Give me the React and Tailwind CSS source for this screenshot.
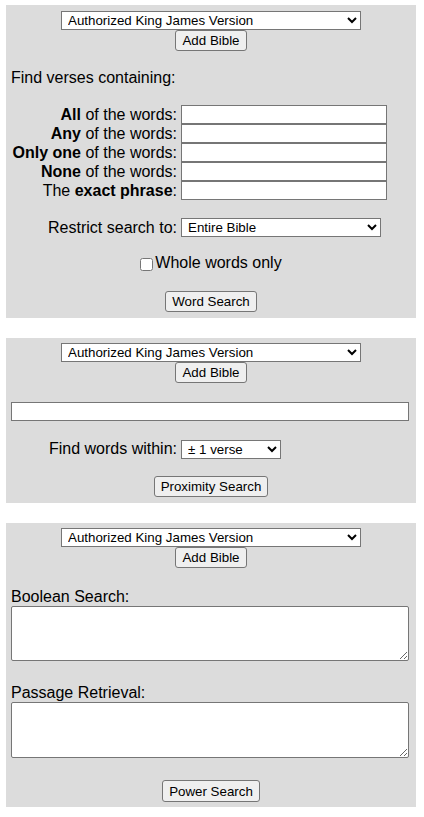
import { useState } from 'react'

const ctrl = "font-['Liberation_Sans',Arial,sans-serif] text-[13.33px] text-black"
const btn = `${ctrl} block mx-auto h-[21px] px-[6px] leading-[19px] bg-[#efefef] border border-[#767676] rounded-[3px]`
const field = 'border border-[#767676] bg-white rounded-[2px]'

function BibleSelect() {
  return (
    <>
      <select
        defaultValue="kjv"
        className={`${ctrl} ${field} block mx-auto w-[300px] h-[19px] pl-[2px] rounded-none`}
      >
        <option value="kjv">Authorized King James Version</option>
        <option value="nkjv">New King James Version</option>
        <option value="asv">American Standard Version</option>
      </select>
      <button type="button" className={btn}>
        Add Bible
      </button>
    </>
  )
}

function WordRow({ label }) {
  return (
    <div className="flex h-[19px] items-center">
      <span className="w-[166px] text-right whitespace-nowrap">{label}</span>
      <input type="text" className={`${ctrl} ${field} ml-[4px] w-[206px] h-[19px] rounded-none`} />
    </div>
  )
}

export default function App() {
  const [whole, setWhole] = useState(false)

  const rows = [
    <><b>All</b> of the words:</>,
    <><b>Any</b> of the words:</>,
    <><b>Only one</b> of the words:</>,
    <><b>None</b> of the words:</>,
    <>The <b>exact phrase</b>:</>,
  ]

  return (
    <div className="min-h-[817px] bg-white pt-[5px] font-['Liberation_Sans',Arial,sans-serif] text-[16px] leading-[18px] text-black">
      {/* word search */}
      <form className="mx-[6px] w-[410px] bg-[#dcdcdc] px-[5px] pt-[6px] pb-[6px]">
        <BibleSelect />
        <p className="mt-[18px]">Find verses containing:</p>
        <div className="mt-[18px]">
          {rows.map((label, i) => (
            <WordRow key={i} label={label} />
          ))}
        </div>
        <div className="mt-[18px] flex h-[19px] items-center">
          <span className="w-[166px] text-right">Restrict search to:</span>
          <select defaultValue="all" className={`${ctrl} ${field} ml-[4px] w-[200px] h-[19px] pl-[2px] rounded-none`}>
            <option value="all">Entire Bible</option>
            <option value="ot">Old Testament</option>
            <option value="nt">New Testament</option>
          </select>
        </div>
        <label className="mt-[17px] flex items-start justify-center gap-[2px]">
          <input
            type="checkbox"
            checked={whole}
            onChange={(e) => setWhole(e.target.checked)}
            className="m-0 mt-[4px] h-[13px] w-[13px]"
          />
          <span>Whole words only</span>
        </label>
        <button type="button" className={`${btn} mt-[19px]`}>
          Word Search
        </button>
      </form>

      {/* proximity search */}
      <form className="mx-[6px] mt-[20px] w-[410px] bg-[#dcdcdc] px-[5px] pt-[5px] pb-[6px]">
        <BibleSelect />
        <input type="text" className={`${ctrl} ${field} mt-[19px] block w-[398px] h-[19px] rounded-none`} />
        <div className="mt-[19px] flex h-[18px] items-center">
          <span className="w-[166px] text-right">Find words within:</span>
          <select defaultValue="1" className={`${ctrl} ${field} ml-[4px] w-[100px] h-[19px] pl-[2px] rounded-none`}>
            <option value="1">± 1 verse</option>
            <option value="2">± 2 verses</option>
            <option value="3">± 3 verses</option>
          </select>
        </div>
        <button type="button" className={`${btn} mt-[18px]`}>
          Proximity Search
        </button>
      </form>

      {/* power search */}
      <form className="mx-[6px] mt-[20px] w-[410px] bg-[#dcdcdc] px-[5px] pt-[5px] pb-[5px]">
        <BibleSelect />
        <p className="mt-[20px]">Boolean Search:</p>
        <textarea className={`${ctrl} ${field} block w-[398px] h-[55px]`} />
        <p className="mt-[23px]">Passage Retrieval:</p>
        <textarea className={`${ctrl} ${field} block w-[398px] h-[56px]`} />
        <button type="button" className={`${btn} mt-[22px] h-[22px]`}>
          Power Search
        </button>
      </form>
    </div>
  )
}
